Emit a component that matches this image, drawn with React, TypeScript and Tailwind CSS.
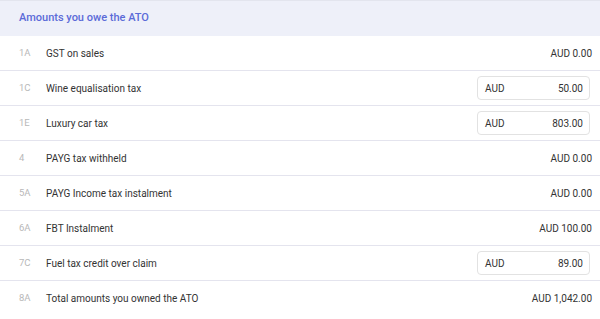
const rows = [
  { code: "1A", label: "GST on sales", amount: "0.00", input: false },
  { code: "1C", label: "Wine equalisation tax", amount: "50.00", input: true },
  { code: "1E", label: "Luxury car tax", amount: "803.00", input: true },
  { code: "4", label: "PAYG tax withheld", amount: "0.00", input: false },
  { code: "5A", label: "PAYG Income tax instalment", amount: "0.00", input: false },
  { code: "6A", label: "FBT Instalment", amount: "100.00", input: false },
  { code: "7C", label: "Fuel tax credit over claim", amount: "89.00", input: true },
  { code: "8A", label: "Total amounts you owned the ATO", amount: "1,042.00", input: false },
];

export default function App() {
  return (
    <div className="w-[600px] h-[319px] bg-white overflow-hidden font-['Roboto',sans-serif] text-[10px] text-[#333]">
      {/* Header */}
      <div className="h-[36px] border-t border-[#e3e5ee] bg-[#eef0f9] flex items-center pl-[19px]">
        <h2 className="text-[11px] font-medium text-[#5b6bd8]">Amounts you owe the ATO</h2>
      </div>

      {rows.map((row, i) => (
        <div
          key={row.code}
          className={
            "h-[35px] flex items-center pl-[19px] pr-[8px] " +
            (i < rows.length - 1 ? "border-b border-[#e4e4ee]" : "")
          }
        >
          <span className="w-[27px] text-[9.5px] text-[#b8b8b8]">{row.code}</span>
          <span className="flex-1">{row.label}</span>
          {row.input ? (
            <div className="w-[113px] h-[24px] mr-[2px] rounded-[4px] border border-[#e2e2e2] flex items-center justify-between pl-[7px] pr-[6px]">
              <span>AUD</span>
              <span>{row.amount}</span>
            </div>
          ) : (
            <span>AUD {row.amount}</span>
          )}
        </div>
      ))}
    </div>
  );
}
